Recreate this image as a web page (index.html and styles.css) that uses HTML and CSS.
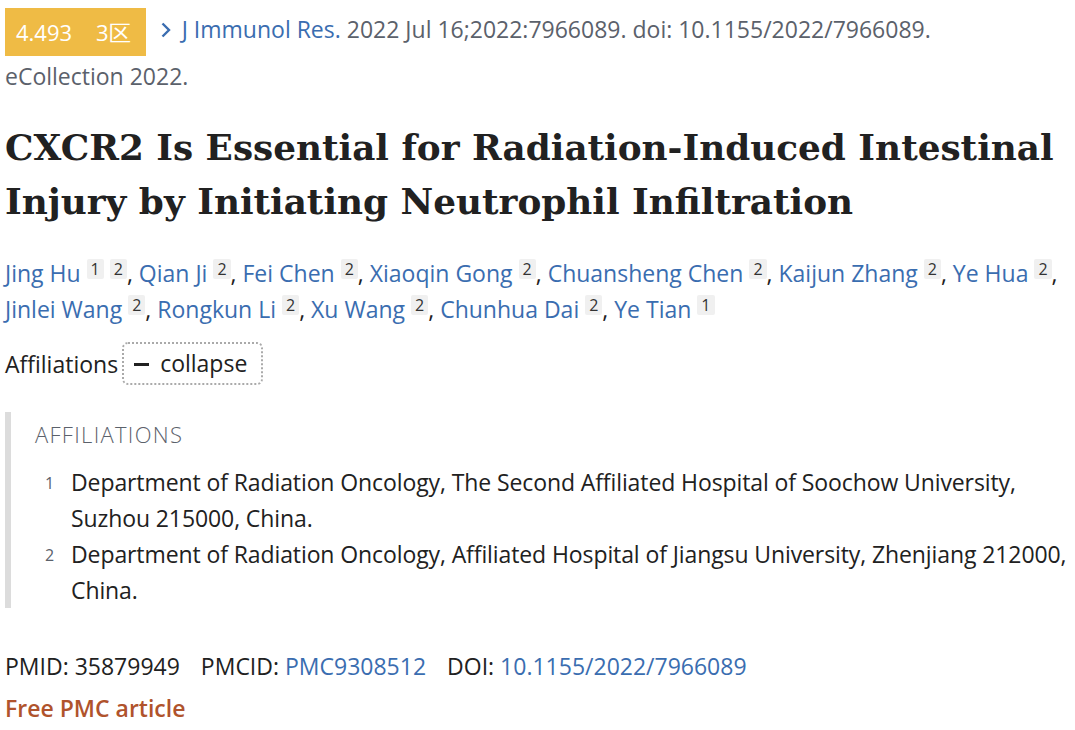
FILE: index.html
```html
<!DOCTYPE html>
<html lang="en">
<head>
<meta charset="utf-8">
<title>CXCR2 Is Essential for Radiation-Induced Intestinal Injury</title>
<link rel="stylesheet" href="styles.css">
</head>
<body>
<main class="article">
  <div class="citation">
    <span class="badge"><span class="if">4.493</span><span class="zone">3区</span></span>
    <a class="journal" href="#"><svg class="chev" width="12" height="18" viewBox="0 0 12 18"><path d="M2.5 2.5 L9 9 L2.5 15.5" fill="none" stroke="#3a6db0" stroke-width="2.4"/></svg>J Immunol Res.</a>
    <span class="cit-rest">2022 Jul 16;2022:7966089. doi: 10.1155/2022/7966089.</span>
    <span class="ecoll">eCollection 2022.</span>
  </div>

  <h1 class="title">CXCR2 Is Essential for Radiation-Induced Intestinal Injury by Initiating Neutrophil Infiltration</h1>

  <div class="authors">
    <a href="#">Jing Hu</a> <sup class="ref">1</sup> <sup class="ref">2</sup>, <a href="#">Qian Ji</a> <sup class="ref">2</sup>, <a href="#">Fei Chen</a> <sup class="ref">2</sup>, <a href="#">Xiaoqin Gong</a> <sup class="ref">2</sup>, <a href="#">Chuansheng Chen</a> <sup class="ref">2</sup>, <a href="#">Kaijun Zhang</a> <sup class="ref">2</sup>, <a href="#">Ye Hua</a> <sup class="ref">2</sup>, <a href="#">Jinlei Wang</a> <sup class="ref">2</sup>, <a href="#">Rongkun Li</a> <sup class="ref">2</sup>, <a href="#">Xu Wang</a> <sup class="ref">2</sup>, <a href="#">Chunhua Dai</a> <sup class="ref">2</sup>, <a href="#">Ye Tian</a> <sup class="ref">1</sup>
  </div>

  <div class="aff-toggle">
    <span>Affiliations</span><button class="collapse" type="button"><span class="minus"></span>collapse</button>
  </div>

  <div class="aff-block">
    <h3 class="aff-title">AFFILIATIONS</h3>
    <ul class="aff-list">
      <li><span class="num">1</span><span>Department of Radiation Oncology, The Second Affiliated Hospital of Soochow University, Suzhou 215000, China.</span></li>
      <li><span class="num">2</span><span>Department of Radiation Oncology, Affiliated Hospital of Jiangsu University, Zhenjiang 212000, China.</span></li>
    </ul>
  </div>

  <div class="ids">
    <span class="id">PMID: <strong>35879949</strong></span>
    <span class="id">PMCID: <a href="#">PMC9308512</a></span>
    <span class="id">DOI: <a href="#">10.1155/2022/7966089</a></span>
  </div>
  <div class="free">Free PMC article</div>
</main>
</body>
</html>
```

FILE: styles.css
```css
html, body {
  margin: 0;
  padding: 0;
  background: #fff;
}
body {
  font-family: "Open Sans", "Noto Sans", sans-serif;
  color: #212121;
  font-size: 23px;
}
a {
  color: #3a6db0;
  text-decoration: none;
}
.article {
  padding: 8px 0 0 5px;
}
.citation {
  color: #5b616b;
  line-height: 40px;
  padding-right: 5px;
}
.ecoll {
  display: inline-block;
}
.badge {
  display: inline-flex;
  align-items: center;
  background: #efbb45;
  color: #fff;
  height: 48px;
  padding: 0 15px 0 11px;
  vertical-align: middle;
  margin-right: 8px;
  line-height: 48px;
  font-size: 22px;
}
.badge .zone {
  margin-left: 24px;
}
.journal .chev {
  margin-right: 10px;
  vertical-align: -1px;
}
.title {
  font-family: "DejaVu Serif", serif;
  font-weight: bold;
  font-size: 35.8px;
  line-height: 54px;
  color: #212121;
  margin: 24px 5px 27px 0;
}
.authors {
  line-height: 36px;
  padding-right: 5px;
}
.ref {
  display: inline-block;
  vertical-align: 7px;
  font-size: 16px;
  line-height: 20px;
  padding: 0 4px;
  background: #f0f0f0;
  color: #333;
  border-radius: 2px;
}
.aff-toggle {
  margin-top: 15px;
  display: flex;
  align-items: center;
}
.collapse {
  display: inline-flex;
  align-items: center;
  font-family: inherit;
  font-size: 23px;
  color: #212121;
  background: #fff;
  border: 2px dotted #aaa;
  border-radius: 6px;
  padding: 5px 14px 5px 10px;
  margin-left: 4px;
  line-height: 29px;
}
.collapse .minus {
  display: inline-block;
  width: 15px;
  height: 2.5px;
  background: #212121;
  margin-right: 11px;
  margin-top: 2px;
}
.aff-block {
  margin-top: 27px;
  border-left: 6px solid #dcdcdc;
  padding: 8px 0 0 24px;
}
.aff-title {
  margin: 0;
  font-size: 22px;
  font-weight: 300;
  color: #5b616b;
  letter-spacing: 1.3px;
  line-height: 28px;
}
.aff-list {
  list-style: none;
  margin: 16px 0 0 0;
  padding: 0 0 0 10px;
}
.aff-list li {
  display: flex;
  align-items: baseline;
  line-height: 36px;
  letter-spacing: -0.1px;
}
.aff-list .num {
  font-size: 16px;
  color: #5b616b;
  width: 26px;
  flex: none;
  position: relative;
  top: -2px;
}
.ids {
  margin-top: 40px;
  line-height: 36px;
}
.ids .id {
  margin-right: 15px;
}
.ids strong {
  font-weight: normal;
}
.free {
  color: #b0532c;
  font-weight: 600;
  line-height: 36px;
  margin-top: 6px;
}
```
